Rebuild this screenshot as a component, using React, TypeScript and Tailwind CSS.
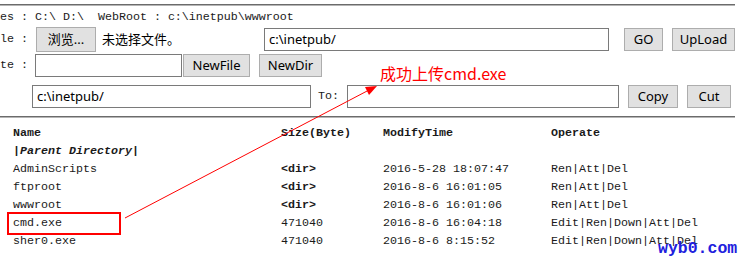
import React from "react";

const mono = "font-['Liberation_Mono','Courier_New',monospace] text-[11.67px] text-[#1a1a1a]";
const sans = "font-['Noto_Sans','Noto_Sans_CJK_SC',sans-serif] text-[13px] text-black";
const btn = `${sans} h-[23px] bg-[#e1e1e1] border border-[#adadad] flex items-center justify-center leading-none`;
const input = `${sans} h-[23px] bg-white border border-[#7a7a7a] flex items-center px-[4px] leading-none`;

const rows = [
	{ name: "AdminScripts", size: "<dir>", time: "2016-5-28 18:07:47", op: "Ren|Att|Del" },
	{ name: "ftproot", size: "<dir>", time: "2016-8-6 16:01:05", op: "Ren|Att|Del" },
	{ name: "wwwroot", size: "<dir>", time: "2016-8-6 16:01:06", op: "Ren|Att|Del" },
	{ name: "cmd.exe", size: "471040", time: "2016-8-6 16:04:18", op: "Edit|Ren|Down|Att|Del" },
	{ name: "sher0.exe", size: "471040", time: "2016-8-6 8:15:52", op: "Edit|Ren|Down|Att|Del" },
];

const Rule = () => (
	<div className="w-[735px] h-[2px] border-t border-[#6b6b6b] border-b border-b-[#b5b5b5]" />
);

const App = () => {
	return (
		<div className="relative w-[745px] h-[263px] overflow-hidden bg-white pt-[4px]">
			<Rule />
			{/*Drives line*/}
			<div className={`${mono} h-[18px] flex items-center whitespace-pre mt-[3px]`}>
				{"es : C:\\ D:\\  WebRoot : c:\\inetpub\\wwwroot"}
			</div>
			{/*Upload row*/}
			<div className="flex items-center h-[25px]">
				<span className={`${mono} w-[36px] whitespace-pre`}>{"le :"}</span>
				<div className={`${btn} w-[60px] h-[25px]`}>浏览...</div>
				<span className={`${sans} ml-[6px] w-[162px]`}>未选择文件。</span>
				<div className={`${input} w-[345px]`}>c:\inetpub/</div>
				<div className={`${btn} ml-[15px] w-[39px]`}>GO</div>
				<div className={`${btn} ml-[9px] w-[63px]`}>UpLoad</div>
			</div>
			{/*Create row*/}
			<div className="flex items-center h-[23px] mt-[2px]">
				<span className={`${mono} w-[35px] whitespace-pre`}>{"te :"}</span>
				<div className={`${input} w-[147px]`} />
				<div className={`${btn} ml-[1px] w-[67px]`}>NewFile</div>
				<div className={`${btn} ml-[9px] w-[63px]`}>NewDir</div>
			</div>
			{/*Copy row*/}
			<div className="flex items-center h-[23px] mt-[8px]">
				<span className="w-[32px]" />
				<div className={`${input} w-[279px]`}>c:\inetpub/</div>
				<span className={`${mono} ml-[7px] w-[29px]`}>To:</span>
				<div className={`${input} w-[272px]`} />
				<div className={`${btn} ml-[9px] w-[50px]`}>Copy</div>
				<div className={`${btn} ml-[9px] w-[44px]`}>Cut</div>
			</div>
			<div className="mt-[8px]">
				<Rule />
			</div>
			{/*File table*/}
			<div className={`${mono} mt-[7px] pl-[13px]`}>
				<div className="flex h-[18px] items-center font-bold">
					<span className="w-[268px]">Name</span>
					<span className="w-[102px]">Size(Byte)</span>
					<span className="w-[168px]">ModifyTime</span>
					<span>Operate</span>
				</div>
				<div className="flex h-[18px] items-center font-bold italic">
					<span>|Parent Directory|</span>
				</div>
				{rows.map((r) => (
					<div key={r.name} className="flex h-[18px] items-center">
						<span className="w-[268px]">{r.name}</span>
						<span className={`w-[102px] ${r.size === "<dir>" ? "font-bold" : ""}`}>{r.size}</span>
						<span className="w-[168px]">{r.time}</span>
						<span>{r.op}</span>
					</div>
				))}
			</div>

			{/*Annotations*/}
			<div className="absolute left-[7px] top-[212px] w-[114px] h-[23px] border-2 border-[#ff0000]" />
			<svg className="absolute left-0 top-0" width="745" height="263">
				<line x1="125" y1="218" x2="369" y2="90" stroke="#ff0000" strokeWidth="1" />
				<polygon points="377,86 369,95 365,87" fill="#ff0000" />
			</svg>
			<div className="absolute left-[380px] top-[63px] font-['Noto_Sans_CJK_SC',sans-serif] text-[16px] leading-[20px] text-[#ff0000]">
				成功上传cmd.exe
			</div>
			<div className="absolute left-[658px] top-[241px] font-['Liberation_Mono',monospace] font-bold text-[16.5px] leading-none text-[#2020dd]">
				wyb0.com
			</div>
		</div>
	);
};

export default App;
